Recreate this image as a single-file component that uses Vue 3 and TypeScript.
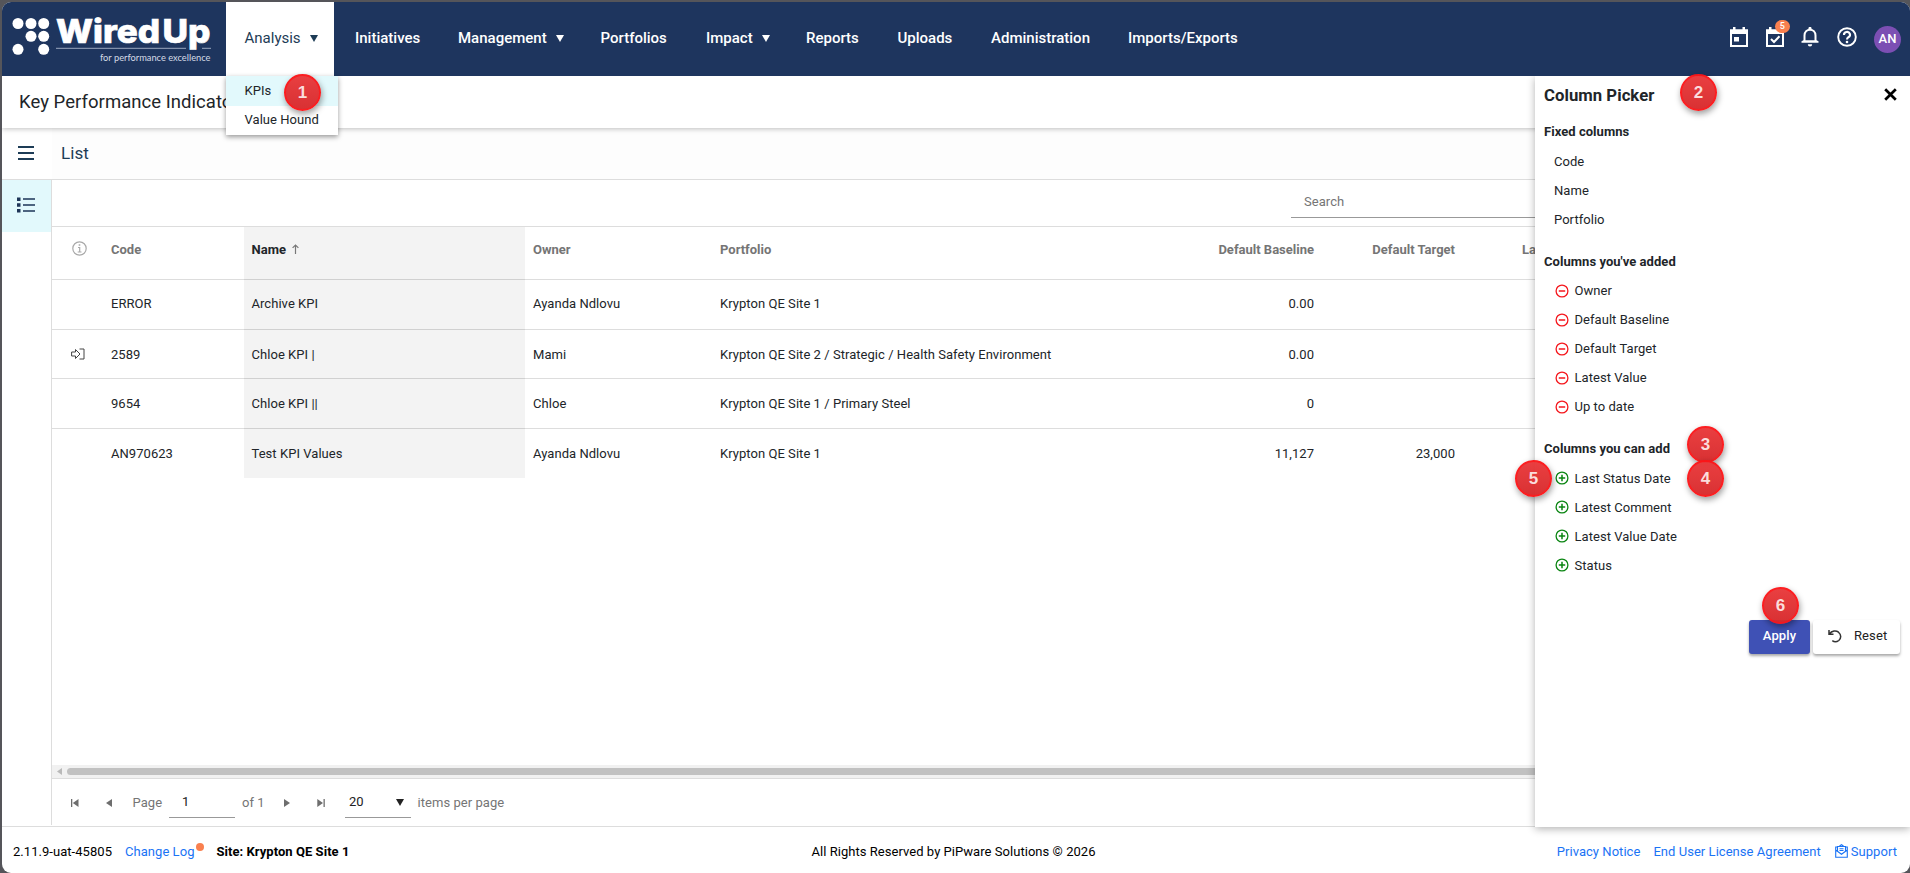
<script setup lang="ts">
interface NavItem { label: string; arrow?: boolean; active?: boolean }
interface Row { linked?: boolean; code: string; name: string; owner: string; portfolio: string; baseline: string; target: string }

const nav: NavItem[] = [
  { label: 'Analysis', arrow: true, active: true },
  { label: 'Initiatives' },
  { label: 'Management', arrow: true },
  { label: 'Portfolios' },
  { label: 'Impact', arrow: true },
  { label: 'Reports' },
  { label: 'Uploads' },
  { label: 'Administration' },
  { label: 'Imports/Exports' },
]
const rows: Row[] = [
  { code: 'ERROR', name: 'Archive KPI', owner: 'Ayanda Ndlovu', portfolio: 'Krypton QE Site 1', baseline: '0.00', target: '' },
  { linked: true, code: '2589', name: 'Chloe KPI |', owner: 'Mami', portfolio: 'Krypton QE Site 2 / Strategic / Health Safety Environment', baseline: '0.00', target: '' },
  { code: '9654', name: 'Chloe KPI ||', owner: 'Chloe', portfolio: 'Krypton QE Site 1 / Primary Steel', baseline: '0', target: '' },
  { code: 'AN970623', name: 'Test KPI Values', owner: 'Ayanda Ndlovu', portfolio: 'Krypton QE Site 1', baseline: '11,127', target: '23,000' },
]
const fixedCols = ['Code', 'Name', 'Portfolio']
const addedCols = ['Owner', 'Default Baseline', 'Default Target', 'Latest Value', 'Up to date']
const availableCols = ['Last Status Date', 'Latest Comment', 'Latest Value Date', 'Status']
const callouts = [
  { n: 1, x: 303, y: 92 },
  { n: 2, x: 1699, y: 92 },
  { n: 3, x: 1706, y: 444 },
  { n: 4, x: 1706, y: 478 },
  { n: 5, x: 1534, y: 478 },
  { n: 6, x: 1781, y: 605 },
]
</script>

<template>
  <div class="desktop">
    <div class="window">
      <header class="topbar">
        <div class="logo">
          <svg class="dots" width="38" height="38" viewBox="0 0 38 38" fill="#fff">
            <circle cx="6" cy="6.500" r="5.500" /><circle cx="19" cy="6.500" r="5.500" /><circle cx="31.700" cy="6.500" r="5.500" />
            <circle cx="19" cy="19.300" r="5.500" /><circle cx="31.700" cy="19.300" r="5.500" />
            <circle cx="6" cy="32.300" r="5.500" /><circle cx="31.700" cy="32.300" r="5.500" />
          </svg>
          <svg class="wordmark" width="158" height="66" viewBox="0 0 158 66">
            <text class="word" x="1" y="43" textLength="104" lengthAdjust="spacingAndGlyphs">Wired</text>
            <text class="word" x="107.500" y="43" textLength="48" lengthAdjust="spacingAndGlyphs">Up</text>
            <path d="M1 48.300H131M147 48.300H156" stroke="#8190ab" stroke-width="1.200" />
            <text class="tag" x="45" y="60.500" textLength="110.500" lengthAdjust="spacingAndGlyphs">for performance excellence</text>
          </svg>
        </div>
        <nav class="nav">
          <div v-for="item in nav" :key="item.label" class="nav-item" :class="{ active: item.active }">
            <span>{{ item.label }}</span>
            <svg v-if="item.arrow" class="caret" width="8" height="7" viewBox="0 0 8 7"><path d="M0 0H8L4 7Z" fill="currentColor" /></svg>
            <div v-if="item.active" class="menu">
              <div class="menu-item selected">KPIs</div>
              <div class="menu-item">Value Hound</div>
            </div>
          </div>
        </nav>
        <div class="actions">
          <svg width="18" height="20" viewBox="0 0 18 20"><path d="M1 3.500H17V19H1Z" fill="none" stroke="#fff" stroke-width="2" /><path d="M0 2.500H18V7H0ZM3 0H5.500V4H3ZM12.500 0H15V4H12.500ZM4 10H9V14.500H4Z" fill="#fff" /></svg>
          <div class="task">
            <svg width="18" height="20" viewBox="0 0 18 20"><path d="M1 3.500H17V19H1Z" fill="none" stroke="#fff" stroke-width="2" /><path d="M0 2.500H18V7H0ZM3 0H5.500V4H3ZM12.500 0H15V4H12.500Z" fill="#fff" /><path d="M5 12L8 15L13.500 9.200" fill="none" stroke="#fff" stroke-width="2" /></svg>
            <span class="badge">5</span>
          </div>
          <svg width="18" height="20" viewBox="0 0 18 20"><path d="M3.500 14.500V8.500C3.500 5 6 2.700 9 2.700S14.500 5 14.500 8.500V14.500" fill="none" stroke="#fff" stroke-width="2" /><path d="M0.500 15.800V14.200L2.500 13.300H15.500L17.500 14.200V15.800ZM7.400 2.500V1.500A1.600 1.600 0 0 1 10.600 1.500V2.500ZM6.800 17.300H11.200A2.200 2.200 0 0 1 6.800 17.300Z" fill="#fff" /></svg>
          <svg width="20" height="20" viewBox="0 0 20 20"><circle cx="10" cy="10" r="8.800" fill="none" stroke="#fff" stroke-width="1.900" /><path d="M7 8A3 2.800 0 1 1 11.400 10.200C10.300 10.900 10 11.300 10 12.600" fill="none" stroke="#fff" stroke-width="2.100" /><circle cx="10" cy="15" r="1.300" fill="#fff" /></svg>
          <span class="avatar">AN</span>
        </div>
      </header>

      <div class="title">Key Performance Indicators</div>

      <div class="subbar">
        <div class="burger">
          <svg width="16" height="14" viewBox="0 0 16 14"><path d="M0 1H16M0 7H16M0 13H16" stroke="#1d3c56" stroke-width="1.800" /></svg>
        </div>
        <div class="subtitle">List</div>
      </div>

      <div class="body">
        <aside class="rail">
          <div class="rail-item">
            <svg width="18" height="16" viewBox="0 0 18 16"><path d="M0 0.500H3.500V4H0ZM0 6.200H3.500V9.700H0ZM0 12H3.500V15.500H0Z" fill="#1d3557" /><path d="M6 2H18M6 8H18M6 14H18" stroke="#1d3557" stroke-width="1.700" /></svg>
          </div>
        </aside>
        <main class="main">
          <div class="toolbar"><div class="search">Search</div></div>
          <div class="grid">
            <div class="row head">
              <div class="cell icon">
                <svg width="15" height="15" viewBox="0 0 15 15" fill="none" stroke="#a9a9a9" stroke-width="1.200"><circle cx="7.500" cy="7.500" r="6.700" /><path d="M6 6.500H7.700V11M5.700 11H9.500" /><path d="M6.700 4H8.300" stroke-width="1.500" /></svg>
              </div>
              <div class="cell">Code</div>
              <div class="cell shaded sorted">Name
                <svg width="7" height="10" viewBox="0 0 7 10"><path d="M3.500 10V1M0.600 3.900L3.500 1L6.400 3.900" fill="none" stroke="#777" stroke-width="1.200" /></svg>
              </div>
              <div class="cell">Owner</div>
              <div class="cell">Portfolio</div>
              <div class="cell num">Default Baseline</div>
              <div class="cell num">Default Target</div>
              <div class="cell num">Latest Value</div>
            </div>
            <div v-for="r in rows" :key="r.code" class="row">
              <div class="cell icon link-icon">
                <svg v-if="r.linked" width="14" height="12" viewBox="0 0 14 12" fill="none" stroke="#444" stroke-width="1"><path d="M0.600 4H4.500V1.500L9 6L4.500 10.500V8H0.600ZM8.500 1H13V11H8.500" /></svg>
              </div>
              <div class="cell">{{ r.code }}</div>
              <div class="cell shaded">{{ r.name }}</div>
              <div class="cell">{{ r.owner }}</div>
              <div class="cell">{{ r.portfolio }}</div>
              <div class="cell num">{{ r.baseline }}</div>
              <div class="cell num">{{ r.target }}</div>
              <div class="cell num"></div>
            </div>
          </div>
          <div class="scrollbar">
            <svg width="5" height="7" viewBox="0 0 5 7"><path d="M5 0V7L0 3.500Z" fill="#b9b9b9" /></svg>
            <div class="thumb"></div>
          </div>
          <div class="pager">
            <svg class="first" width="8" height="8" viewBox="0 0 8 8" fill="#6e6e6e"><path d="M0 0H1.300V8H0ZM7.500 0V8L1.800 4Z" /></svg>
            <svg class="prev" width="6" height="8" viewBox="0 0 6 8" fill="#6e6e6e"><path d="M6 0V8L0 4Z" /></svg>
            <span class="page">Page</span>
            <span class="field num-field">1</span>
            <span class="of">of 1</span>
            <svg class="next" width="6" height="8" viewBox="0 0 6 8" fill="#6e6e6e"><path d="M0 0V8L6 4Z" /></svg>
            <svg class="last" width="8" height="8" viewBox="0 0 8 8" fill="#6e6e6e"><path d="M6.500 0H7.800V8H6.500ZM0.300 0V8L6 4Z" /></svg>
            <span class="field size-field">20
              <svg width="8" height="7" viewBox="0 0 8 7"><path d="M0 0H8L4 7Z" fill="#222" /></svg>
            </span>
            <span>items per page</span>
          </div>
        </main>
      </div>

      <footer class="footer">
        <div class="left">
          <span>2.11.9-uat-45805</span>
          <a class="log">Change Log<i class="dot"></i></a>
          <b>Site: Krypton QE Site 1</b>
        </div>
        <div class="rights">All Rights Reserved by PiPware Solutions © 2026</div>
        <div class="right">
          <a>Privacy Notice</a>
          <a>End User License Agreement</a>
          <a class="support">
            <svg width="13" height="14" viewBox="0 0 13 14" fill="none" stroke="#1a73f5" stroke-width="1.100"><path d="M2.500 3H0.700V13.200H12.300V3H10.500M4.500 2L6.500 0.700L8.500 2M2.500 7.500V2.500H10.500V7.500M0.700 6L6.500 10.200L12.300 6M4.500 4.700H8.500M4.500 6.500H8.500" /></svg>Support
          </a>
        </div>
      </footer>

      <section class="picker">
        <div class="picker-head">
          <span>Column Picker</span>
          <svg width="13" height="13" viewBox="0 0 13 13"><path d="M1.200 1.200L11.800 11.800M11.800 1.200L1.200 11.800" stroke="#000" stroke-width="2.700" /></svg>
        </div>
        <h4>Fixed columns</h4>
        <ul class="plain">
          <li v-for="c in fixedCols" :key="c">{{ c }}</li>
        </ul>
        <h4>Columns you've added</h4>
        <ul>
          <li v-for="c in addedCols" :key="c">
            <svg width="14" height="14" viewBox="0 0 14 14" fill="none" stroke="#f5161c"><circle cx="7" cy="7" r="5.900" stroke-width="1.300" /><path d="M3.800 7H10.200" stroke-width="1.500" /></svg>{{ c }}
          </li>
        </ul>
        <h4>Columns you can add</h4>
        <ul>
          <li v-for="c in availableCols" :key="c">
            <svg width="14" height="14" viewBox="0 0 14 14" fill="none" stroke="#0a8512"><circle cx="7" cy="7" r="5.900" stroke-width="1.300" /><path d="M3.800 7H10.200M7 3.800V10.200" stroke-width="1.500" /></svg>{{ c }}
          </li>
        </ul>
        <div class="buttons">
          <button class="apply">Apply</button>
          <button class="reset">
            <svg width="14" height="14" viewBox="0 0 14 14" fill="none" stroke="#333" stroke-width="1.500"><path d="M1 1V5.300H5.500M1.200 5.200C4 1.500 8 1.300 10.500 3.200C13.500 5.800 13.300 9.500 10.800 11.500C8.800 13 6 13 4.300 11.700" /></svg>Reset
          </button>
        </div>
      </section>
    </div>

    <span v-for="c in callouts" :key="c.n" class="callout" :style="{ left: c.x - 19 + 'px', top: c.y - 18.500 + 'px' }">{{ c.n }}</span>
  </div>
</template>

<style>
body { margin: 0; overflow: hidden; }
</style>

<style scoped>
* { box-sizing: border-box; }
.desktop { position: relative; width: 1910px; height: 873px; padding: 2px 0 0 2px; background: #55555a; overflow: hidden; font: 13px Roboto, sans-serif; letter-spacing: .045px; color: #212529; }
.window { position: relative; display: flex; flex-direction: column; height: 871px; background: #fff; border-radius: 9px; overflow: hidden; }
.topbar { position: relative; z-index: 2; display: flex; flex: none; height: 74px; background: #1e355e; color: #fff; }
.logo { display: flex; width: 224px; padding: 15px 0 0 10px; }
.wordmark { margin: -17px 0 0 5px; overflow: visible; }
.word { font: 800 33px Inter, "Open Sans", sans-serif; letter-spacing: 0; fill: #fff; stroke: #fff; stroke-width: .7px; }
.tag { font: 9px Lato, sans-serif; letter-spacing: 0; fill: #d5dbe6; }
.nav { display: grid; grid-template-columns: 109px 103px 142.500px 105.500px 100px 91.500px 93.500px 137px 160px; font-size: 15px; font-weight: 500; letter-spacing: 0; }
.nav-item { position: relative; display: flex; align-items: center; padding: 0 0 3px 20px; white-space: nowrap; }
.nav-item.active { width: 108px; background: #fff; color: #1d3c56; font-weight: 400; padding-left: 18.500px; }
.caret { margin: 2px 0 0 9px; }
.menu { position: absolute; z-index: 3; top: 74px; left: 0; width: 112px; background: #fff; box-shadow: 0 2px 5px rgba(0, 0, 0, .4); font-size: 13px; letter-spacing: .045px; color: #212529; }
.menu-item { height: 29px; padding-left: 18.500px; line-height: 28px; }
.menu-item.selected { height: 30px; line-height: 30px; background: #e2f9fc; }
.actions { display: flex; margin-left: auto; padding: 25px 9px 0 0; align-items: flex-start; gap: 17.500px; }
.task { position: relative; height: 20px; }
.badge { position: absolute; left: 9px; top: -7.500px; width: 15.500px; height: 13px; border-radius: 7px; background: #f9804f; font-size: 9px; font-weight: 500; line-height: 13.500px; text-align: center; }
.avatar { width: 27px; height: 27px; margin-top: -1px; border-radius: 50%; background: #7c4fb3; font-weight: 500; line-height: 26px; text-align: center; }
.title { position: relative; z-index: 1; flex: none; height: 52px; padding-left: 17px; background: #fff; box-shadow: 0 1px 5px rgba(0, 0, 0, .25); font-size: 18.500px; line-height: 53px; }
.subbar { display: flex; flex: none; height: 52px; border-bottom: 1px solid #ddd; color: #1d3c56; }
.burger { display: flex; align-items: center; width: 50px; padding: 0 0 2px 16px; }
.subtitle { flex: 1; padding-left: 9px; background: #fdfdfd; font-size: 17px; line-height: 50px; }
.body { display: flex; height: 647px; flex: none; border-bottom: 1px solid #ddd; }
.rail { width: 50px; height: 645px; border-right: 1px solid #ddd; }
.rail-item { height: 52px; padding: 17px 0 0 15px; background: #e2f9fc; }
.main { display: flex; flex: 1; flex-direction: column; min-width: 0; overflow: hidden; }
.toolbar { display: flex; height: 47px; border-bottom: 1px solid #ddd; padding-left: 1239px; }
.search { flex: 1; height: 38px; padding-left: 13px; border-bottom: 1px solid #999; color: #757575; line-height: 43.500px; }
.grid { flex: 1; }
.row { display: grid; grid-template-columns: 51px 141px 281px 187px 440px 170px 141px 445px; height: 49.670px; }
.row + .row .cell { border-top: 1px solid #ddd; }
.row + .row .shaded { border-top-color: #d0d0d0; }
.cell { padding-left: 8px; line-height: 49px; white-space: nowrap; }
.head + .row .cell { line-height: 48px; }
.row .shaded { padding-left: 7.500px; background: #f3f3f3; }
.head { height: 52px; color: #757575; font-weight: 700; letter-spacing: 0; }
.head .cell { line-height: 46px; }
.head .sorted { color: #212529; }
.sorted svg { margin-left: 3px; }
.num { padding: 0 8px 0 0; text-align: right; }
.num:last-child { padding: 0 0 0 59px; text-align: left; }
.head .icon { padding-left: 19.500px; }
.icon svg { display: block; margin-top: 14px; }
.link-icon { padding-left: 19px; }
.link-icon svg { margin-top: 18px; }
.scrollbar { display: flex; align-items: center; height: 14px; padding-left: 5px; border-bottom: 1px solid #ddd; background: #f1f1f1; }
.thumb { flex: 1; height: 7px; margin-left: 5px; border-radius: 4px; background: #c1c1c1; }
.pager { display: flex; align-items: center; height: 47px; padding-left: 19px; color: #757575; }
.prev { margin-left: 27px; }
.page { width: 36.500px; margin-left: 20.500px; }
.field { width: 66px; height: 31px; border-bottom: 1px solid #999; color: #222; line-height: 30px; }
.num-field { padding-left: 13px; }
.of { width: 42px; margin-left: 7px; }
.last { margin-left: 27px; }
.size-field { display: flex; justify-content: space-between; align-items: flex-start; margin: 0 6.500px 0 20px; padding: 0 7px 0 4px; }
.size-field svg { margin-top: 12px; }
.footer { display: grid; grid-template-columns: 1fr auto 1fr; flex: 1; padding: 2px 13px 0 11px; align-items: center; color: #000; }
.rights { margin-right: 3px; }
.left, .right { display: flex; }
.left { gap: 13px; }
.right { justify-content: flex-end; gap: 13px; }
a { color: #1a73f5; }
.log { position: relative; margin-right: 9px; }
.dot { position: absolute; left: 71px; top: -1px; width: 8px; height: 8px; border-radius: 50%; background: #f9804f; }
b { font-weight: 700; }
.support { display: flex; gap: 3px; align-items: center; margin-left: 1px; }
.picker { position: absolute; z-index: 2; left: 1533px; top: 74px; width: 375px; height: 751px; padding: 0 10px 0 9px; background: #fff; box-shadow: 0 2px 8px rgba(0, 0, 0, .3); clip-path: inset(0 0 -12px -12px); }
.picker-head { display: flex; justify-content: space-between; padding: 12px 3px 0 0; height: 42px; font-size: 16.700px; font-weight: 700; line-height: 16px; }
.picker h4 { margin: 0; height: 28.500px; font-size: 13px; font-weight: 700; line-height: 28px; }
.picker ul { margin: 0 0 14px; padding: 0 0 0 11px; list-style: none; }
.picker ul.plain { padding-left: 10px; }
.picker li { display: flex; align-items: center; gap: 5.500px; height: 29px; }
.buttons { display: flex; justify-content: flex-end; gap: 3px; margin-top: 40.500px; }
button { display: flex; height: 34px; align-items: center; padding: 0 0 3px; border: 0; border-radius: 3px; box-shadow: 0 2px 3px rgba(0, 0, 0, .35); font: 400 13px Roboto, sans-serif; letter-spacing: .1px; }
.apply { width: 61px; justify-content: center; background: #3f51b5; color: #fff; font-weight: 500; }
.reset { width: 87px; padding-left: 15px; gap: 12px; background: #fff; color: #222; }
.callout { position: absolute; z-index: 5; width: 37px; height: 37px; border: 2px solid #fc1518; border-radius: 50%; background: linear-gradient(#e9383a, #d8292b); opacity: .96; box-shadow: 1px 3px 6px rgba(0, 0, 0, .4); color: #fbdcdc; font: 700 17px/33px "Liberation Sans", sans-serif; text-align: center; }
</style>
